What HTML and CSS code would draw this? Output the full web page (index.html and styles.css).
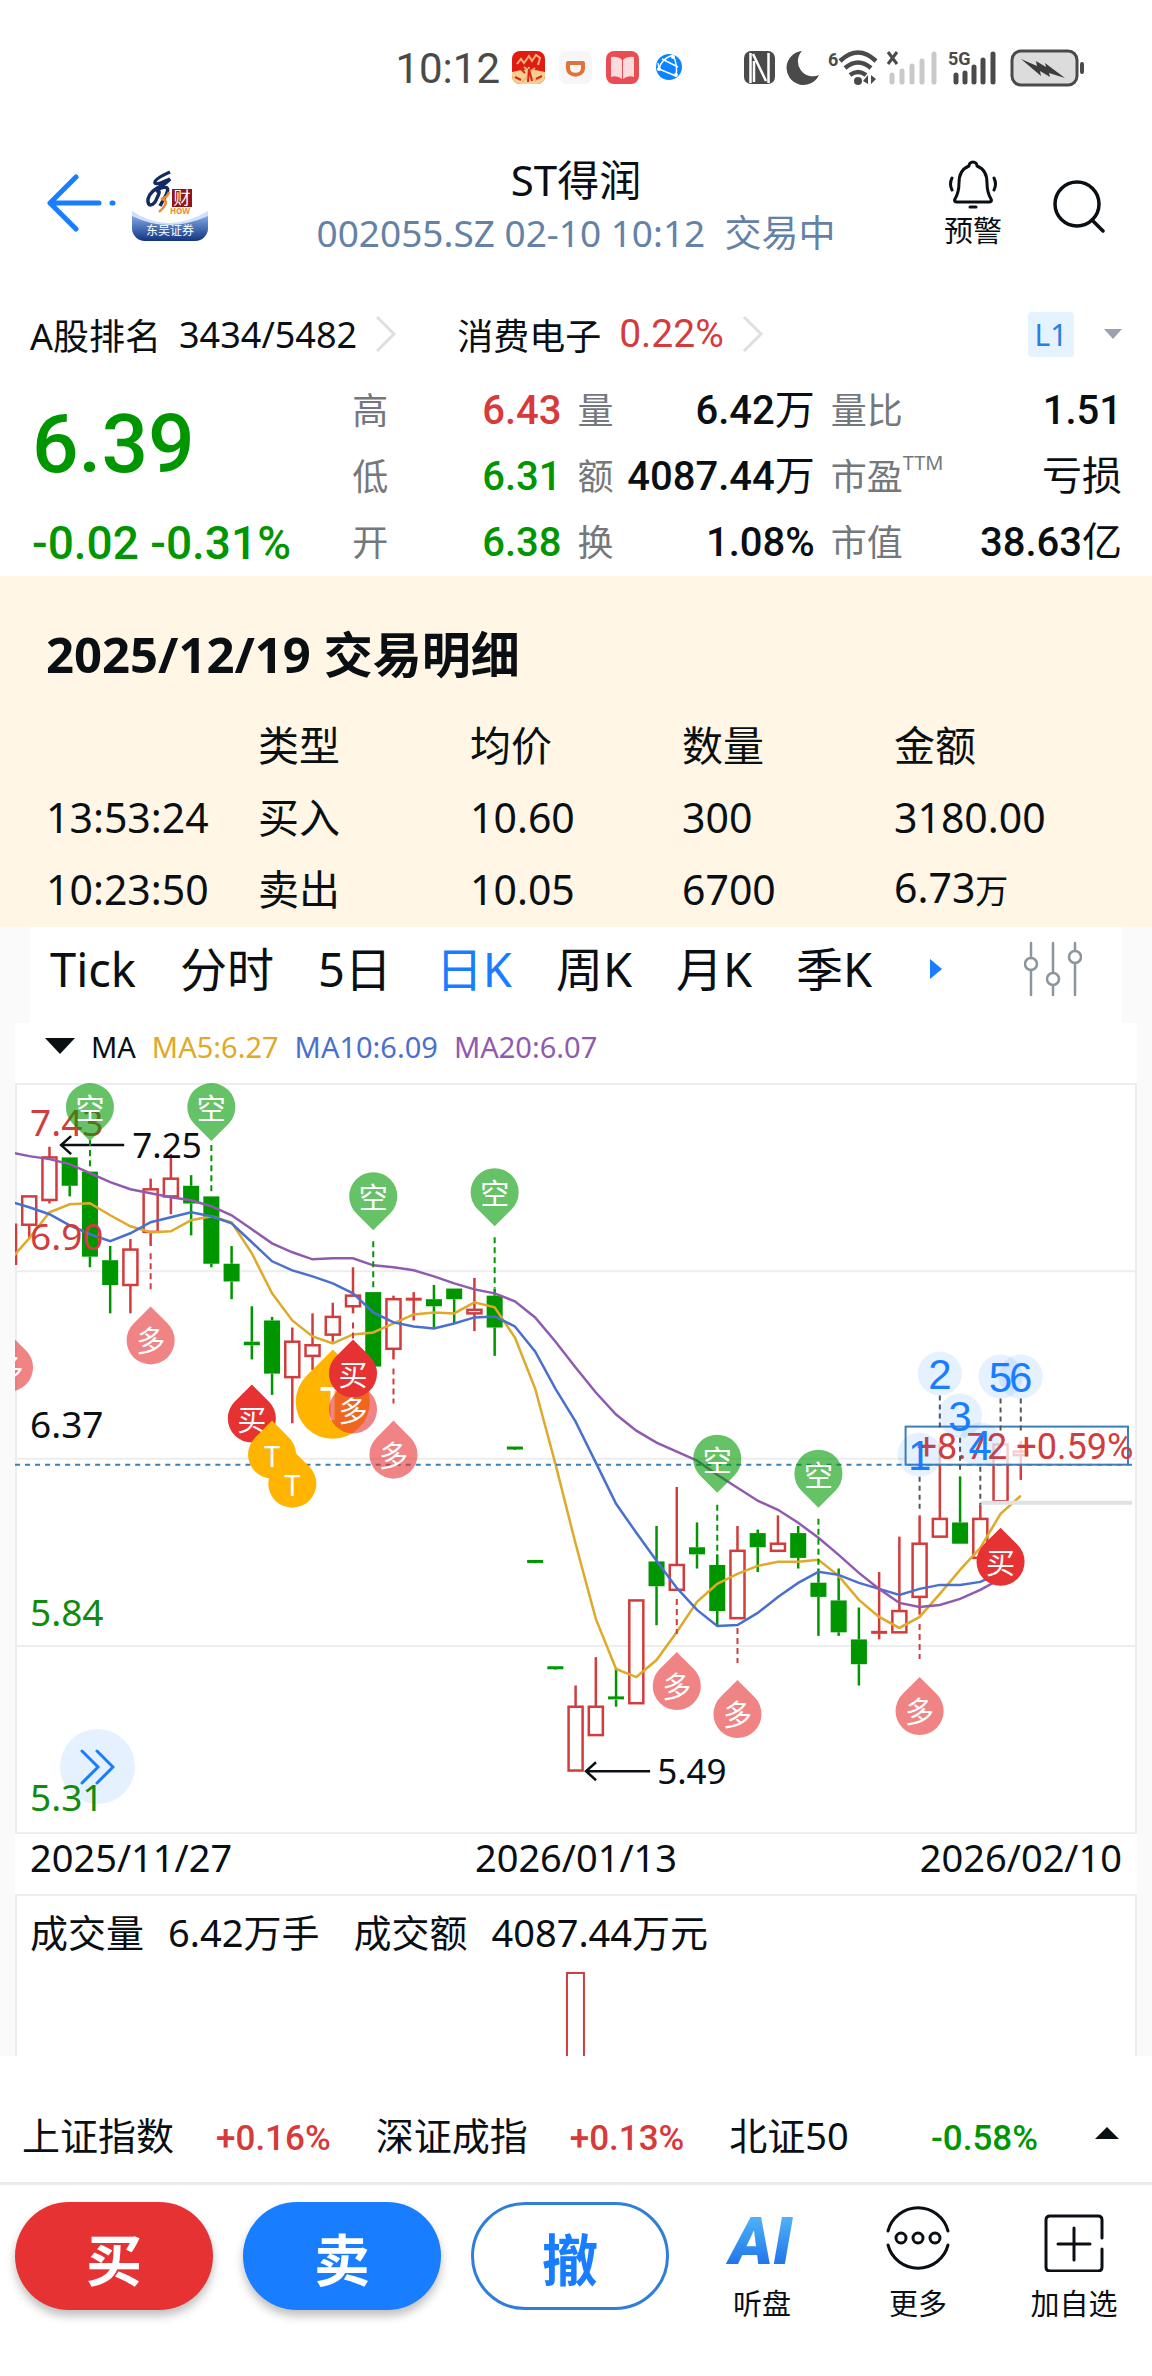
FILE: index.html
```html
<!DOCTYPE html>
<html lang="zh-CN">
<head>
  <meta charset="UTF-8">
  <meta name="viewport" content="width=device-width, initial-scale=1.0">
  <title>ST得润 002055.SZ</title>
  <link rel="stylesheet" href="styles.css">
</head>
<body>
  <div class="statusbar">
    <span class="clock">10:12</span>
    <svg class="apps" width="170" height="34" viewBox="0 0 170 34">
      <rect width="33" height="33" rx="8" fill="#e01b12"/>
      <path d="M0 21q16-5 33 0v4a8 8 0 0 1-8 8H8a8 8 0 0 1-8-8z" fill="#f7cf8e"/>
      <path d="M5 13l4-5 3 4 5-7 3 5 4-6 4 3-2 7M15 29l2-13M17 20l-5-4M17 22l6-5M10 31l7-7 7 6" stroke="#f9b27a" stroke-width="2" fill="none"/>
      <path d="M16 31l1-13 3 12M3 26l6 3M24 28l6-3M13 22l-5-5" stroke="#d8281c" stroke-width="2" fill="none"/>
      <rect x="47" width="33" height="33" rx="8" fill="#f6f6f6"/>
      <path d="M56 12h15v5c0 9-15 9-15 0z" fill="none" stroke="#e0733a" stroke-width="4" stroke-linejoin="round"/>
      <rect x="94" width="33" height="33" rx="8" fill="#ea4c54"/>
      <path d="M99 6q7-1 11 3v19q-5-4-11-2zM122 6q-7-1-11 3v19q5-4 11-2z" fill="#fbdcdc"/>
      <circle cx="157" cy="16" r="13" fill="#0a84ff"/>
      <path d="M161 4q-12 4-14 14M147 18l17 7M150 8l16 8M161 4q5 10 3 21M147 18l-1-6" fill="none" stroke="#fff" stroke-width="1.4"/>
      <circle cx="147" cy="18" r="2" fill="#fff"/><circle cx="164" cy="24" r="2" fill="#fff"/><circle cx="161" cy="6" r="2" fill="#fff"/>
    </svg>
    <svg class="system" width="340" height="38" viewBox="0 0 340 38">
      <g fill="#4a4a4a">
        <rect y="2" width="31" height="33" rx="7"/>
        <path d="M6.500 34V4M9 5l13 27M24.500 34V4M10 33V12" stroke="#fff" stroke-width="2.500" fill="none"/>
        <path d="M58 2a17 17 0 1 0 17 24A15 15 0 0 1 58 2z"/>
        <text x="84" y="17" class="tiny">6</text>
        <g fill="none" stroke="#4a4a4a" stroke-width="4.5">
          <path d="M96 12q18-17 36 0"/>
          <path d="M101 19q13-11 26 0"/>
          <path d="M106 26q8-6 16 0"/>
        </g>
        <circle cx="114" cy="32" r="4"/>
        <path d="M119 32l5-6v9zM127 26l5 4-5 5z"/>
        <path d="M144 3l9 12M153 3l-9 12" stroke="#4a4a4a" stroke-width="3"/>
        <text x="204" y="16" class="tiny">5G</text>
        <path d="M212 33v-7M221 33v-9M230 33v-15M239 33v-22M249 33V5" stroke="#4a4a4a" stroke-width="5" stroke-linecap="round"/>
      </g>
      <path d="M148 33v-7M158 33v-11M168 33v-16M178 33v-21M190 33V5" stroke="#c9c9c9" stroke-width="5" stroke-linecap="round"/>
      <rect x="268" y="2" width="65" height="34" rx="9" fill="#dcdcdc" stroke="#4a4a4a" stroke-width="3"/>
      <path d="M277 10l16 7-1-5 10 6-1-4 20 15-16-5 1 4-10-6 1 5z" fill="#3c3c3c"/>
      <rect x="336" y="13" width="4" height="12" rx="2" fill="#4a4a4a"/>
    </svg>
  </div>

  <header class="header">
    <div class="header-left">
      <button class="icon-btn" aria-label="返回">
        <svg width="70" height="64" viewBox="0 0 70 64" fill="none" stroke="#187dff" stroke-width="5" stroke-linecap="round" stroke-linejoin="round">
          <path d="M30 3L4 29l26 26M4 29h49M66 29h1"/>
        </svg>
      </button>
      <svg class="broker" width="76" height="72" viewBox="0 0 76 72">
        <defs>
          <linearGradient id="wave" x1="0" y1="0" x2="0" y2="1">
            <stop offset="0" stop-color="#7ea6e6"/>
            <stop offset="1" stop-color="#12347f"/>
          </linearGradient>
        </defs>
        <path d="M0 41q36 24 76 0v17a13 13 0 0 1-13 13H13A13 13 0 0 1 0 58z" fill="#cfe0f7"/>
        <path d="M0 46q36 18 76 0v12a13 13 0 0 1-13 13H13A13 13 0 0 1 0 58z" fill="url(#wave)"/>
        <path d="M38 2c-9 4-16 8-15 11 1 2 8-1 15-4-7 8-20 10-22 20-1 9 6 7 9-1 3-6 3-8-1-7 8-6 15-5 10 4l-6 11" fill="none" stroke="#142a63" stroke-width="3.5"/>
        <path d="M37 22q-1 5-8 7 7 1 4 6-2 4-6 7" fill="none" stroke="#ef8a2c" stroke-width="2.5"/>
        <rect x="40" y="19" width="20" height="18" fill="#8f1518"/>
        <text x="50" y="34" text-anchor="middle" font-size="17" fill="#fff">财</text>
        <text x="48" y="44" text-anchor="middle" font-size="8" font-weight="700" fill="#ef8a2c">HOW</text>
        <text x="38" y="65" text-anchor="middle" font-size="12" fill="#fff">东吴证券</text>
      </svg>
    </div>
    <div class="header-title">
      <h1>ST得润</h1>
      <p>002055.SZ 02-10 10:12&nbsp; 交易中</p>
    </div>
    <div class="header-right">
      <button class="icon-btn alert-btn">
        <svg width="50" height="50" viewBox="0 0 50 50" fill="none" stroke="#0a0f14" stroke-width="3" stroke-linecap="round" stroke-linejoin="round">
          <path d="M21 7a4 4 0 0 1 8 0c8 3 10 10 10 17 0 8 1 11 4 16 1 2 0 3-2 3H9c-2 0-3-1-2-3 3-5 4-8 4-16 0-7 2-14 10-17zM22 48h6M4 19q-3 6 0 12M46 19q3 6 0 12"/>
        </svg>
        <span>预警</span>
      </button>
      <button class="icon-btn" aria-label="搜索">
        <svg width="54" height="54" viewBox="0 0 54 54" fill="none" stroke="#0a0f14" stroke-width="3.5" stroke-linecap="round">
          <circle cx="25" cy="25" r="22"/>
          <path d="M40 41l11 11"/>
        </svg>
      </button>
    </div>
  </header>

  <div class="rank">
    <a href="#" class="rank-link">A股排名 <span>3434/5482</span>
      <svg width="22" height="38" viewBox="0 0 22 38"><path d="M2 2l17 17L2 36" fill="none" stroke="#dcdfe3" stroke-width="3"/></svg>
    </a>
    <a href="#" class="rank-link">消费电子 <span class="up din">0.22%</span>
      <svg width="22" height="38" viewBox="0 0 22 38"><path d="M2 2l17 17L2 36" fill="none" stroke="#dcdfe3" stroke-width="3"/></svg>
    </a>
    <span class="level">L1</span>
    <svg width="18" height="10" viewBox="0 0 18 10"><path d="M0 0h18l-9 10z" fill="#9aa3ad"/></svg>
  </div>

  <section class="quote">
    <div class="price down">
      <strong>6.39</strong>
      <span>-0.02 -0.31%</span>
    </div>
    <dl>
      <div><dt>高</dt><dd class="up">6.43</dd></div>
      <div><dt>低</dt><dd class="down">6.31</dd></div>
      <div><dt>开</dt><dd class="down">6.38</dd></div>
    </dl>
    <dl>
      <div><dt>量</dt><dd>6.42<i>万</i></dd></div>
      <div><dt>额</dt><dd>4087.44<i>万</i></dd></div>
      <div><dt>换</dt><dd>1.08%</dd></div>
    </dl>
    <dl>
      <div><dt>量比</dt><dd>1.51</dd></div>
      <div><dt>市盈<sup>TTM</sup></dt><dd><i>亏损</i></dd></div>
      <div><dt>市值</dt><dd>38.63<i>亿</i></dd></div>
    </dl>
  </section>

  <section class="trades">
    <h2>2025/12/19 交易明细</h2>
    <table>
      <thead>
        <tr><th></th><th>类型</th><th>均价</th><th>数量</th><th>金额</th></tr>
      </thead>
      <tbody>
        <tr><td>13:53:24</td><td>买入</td><td>10.60</td><td>300</td><td>3180.00</td></tr>
        <tr><td>10:23:50</td><td>卖出</td><td>10.05</td><td>6700</td><td>6.73<small>万</small></td></tr>
      </tbody>
    </table>
  </section>

  <main class="panel">
    <nav class="tabs">
      <button>Tick</button>
      <button>分时</button>
      <button>5日</button>
      <button class="active">日K</button>
      <button>周K</button>
      <button>月K</button>
      <button>季K</button>
      <button class="more" aria-label="更多周期">
        <svg width="12" height="20" viewBox="0 0 12 20"><path d="M0 0l12 10L0 20z" fill="#187dff"/></svg>
      </button>
      <button class="settings" aria-label="指标设置">
        <svg width="58" height="56" viewBox="0 0 58 56" fill="none" stroke="#8c959e" stroke-width="2.5" stroke-linecap="round">
          <path d="M7 2v15M7 29v25M29 2v30M29 44v10M51 2v8M51 22v32"/>
          <circle cx="7" cy="23" r="6"/><circle cx="29" cy="38" r="6"/><circle cx="51" cy="16" r="6"/>
        </svg>
      </button>
    </nav>

    <div class="chart-box">
      <div class="legend">
        <svg width="30" height="16" viewBox="0 0 30 16"><path d="M0 0h30L15 16z" fill="#0a0f14"/></svg>
        <span>MA</span>
        <span class="ma5">MA5:6.27</span>
        <span class="ma10">MA10:6.09</span>
        <span class="ma20">MA20:6.07</span>
      </div>
      <div class="chart">
        <button class="forward" aria-label="快进">
          <svg width="36" height="36" viewBox="0 0 36 36" fill="none" stroke="#187dff" stroke-width="3" stroke-linecap="round"><path d="M3 2l16 16L3 34M18 2l16 16-16 16"/></svg>
        </button>
        <svg id="kline" viewBox="0 0 1120 750"></svg>
      </div>
      <div class="dates">
        <span>2025/11/27</span><span>2026/01/13</span><span>2026/02/10</span>
      </div>
      <div class="volume">
        <p><span>成交量</span><span>6.42万手</span><span class="amount">成交额</span><span>4087.44万元</span></p>
        <svg viewBox="0 0 1120 84"><rect x="551" y="1" width="17" height="90" fill="#fff" stroke="#d23c3c" stroke-width="2"/></svg>
      </div>
    </div>
  </main>

  <div class="indices">
    <div><span>上证指数</span><b class="up">+0.16%</b></div>
    <div><span>深证成指</span><b class="up">+0.13%</b></div>
    <div><span>北证50</span><b class="down">-0.58%</b></div>
    <svg width="24" height="12" viewBox="0 0 24 12"><path d="M0 12h24L12 0z" fill="#0a0f14"/></svg>
  </div>

  <footer class="actions">
    <div class="orders">
      <button class="buy">买</button>
      <button class="sell">卖</button>
      <button class="cancel">撤</button>
    </div>
    <div class="tools">
      <button>
        <svg width="84" height="70" viewBox="0 0 84 70">
          <defs>
            <linearGradient id="ai" x1="0" y1="0" x2="0" y2="1">
              <stop offset="0" stop-color="#5fc3fb"/>
              <stop offset="1" stop-color="#0f62e6"/>
            </linearGradient>
          </defs>
          <text x="41" y="62" text-anchor="middle" class="ai" fill="url(#ai)">AI</text>
        </svg>
        <span>听盘</span>
      </button>
      <button>
        <svg width="68" height="70" viewBox="0 0 68 70" fill="none" stroke="#0a0f14" stroke-width="3" stroke-linecap="round">
          <path d="M4 29a31 31 0 0 1 60 0M4 43a31 31 0 0 0 60 0"/>
          <circle cx="17" cy="36" r="5"/><circle cx="34" cy="36" r="5"/><circle cx="51" cy="36" r="5"/>
        </svg>
        <span>更多</span>
      </button>
      <button>
        <svg width="68" height="70" viewBox="0 0 68 70" fill="none" stroke="#0a0f14" stroke-width="3" stroke-linecap="round">
          <path d="M62 36V18q0-4-4-4H10q-4 0-4 4v47q0 4 4 4h48q4 0 4-4V47M18 42h32M34 26v32"/>
        </svg>
        <span>加自选</span>
      </button>
    </div>
  </footer>

  <script src="chart.js"></script>
</body>
</html>
```
FILE: styles.css
```css
* {
  box-sizing: border-box;
}
body {
  margin: 0;
  background-color: #ffffff;
  color: #0a0f14;
  font-family: "Noto Sans", "Noto Sans CJK SC", sans-serif;
  font-size: 37px;
}
h1, h2, p, dl, dd {
  margin: 0;
}
svg {
  display: block;
}
button {
  padding: 0;
  border: none;
  background: none;
  color: inherit;
  font-family: inherit;
  cursor: pointer;
}
a {
  color: inherit;
  text-decoration: none;
}
.up {
  color: #d63a3a;
}
.down {
  color: #009600;
}
.din,
.price,
.quote dd,
.indices b,
.clock {
  font-family: Roboto, "Noto Sans CJK SC", sans-serif;
}

/* status bar */
.statusbar {
  display: flex;
  align-items: center;
  justify-content: flex-end;
  height: 136px;
  padding-right: 68px;
}
.clock {
  margin-right: 12px;
  font-size: 42px;
  color: #4a4a4a;
}
.system {
  margin-left: 62px;
}
.tiny {
  font-family: Roboto, sans-serif;
  font-size: 18px;
  font-weight: 700;
}

/* header */
.header {
  display: grid;
  grid-template-columns: 1fr auto 1fr;
  align-items: center;
  height: 140px;
  padding: 0 46px;
  margin-bottom: 16px;
}
.header-left,
.header-right {
  display: flex;
  align-items: center;
  gap: 16px;
}
.header-right {
  justify-content: flex-end;
  gap: 50px;
}
.header-title {
  text-align: center;
  line-height: 53px;
}
.header-title h1 {
  font-size: 42px;
  font-weight: 400;
  line-height: 53px;
}
.header-title p {
  color: #6482a6;
}
.alert-btn {
  display: flex;
  flex-direction: column;
  align-items: center;
  font-size: 29px;
  line-height: 44px;
}

/* rank row */
.rank {
  display: flex;
  align-items: center;
  height: 84px;
  padding: 0 30px;
}
.rank-link {
  display: flex;
  align-items: center;
  gap: 18px;
  margin-right: 60px;
  font-size: 36px;
}
.rank .din {
  font-size: 39px;
}
.level {
  margin-left: auto;
  margin-right: 30px;
  width: 46px;
  border-radius: 4px;
  background-color: #e5f2ff;
  color: #2a7de1;
  font-size: 30px;
  line-height: 45px;
  text-align: center;
}

/* quote */
.quote {
  display: grid;
  grid-template-columns: 304fr 209fr 237fr 291fr;
  gap: 16px;
  padding: 2px 30px 0 32px;
}
.price {
  font-weight: 500;
  white-space: nowrap;
}
.price strong {
  display: block;
  font-size: 82px;
  font-weight: 500;
  line-height: 132px;
}
.price span {
  font-size: 46px;
  line-height: 66px;
}
.quote dl div {
  display: flex;
  justify-content: space-between;
  height: 66px;
  line-height: 66px;
  white-space: nowrap;
}
.quote dt {
  font-size: 36px;
  color: #74787d;
}
.quote dd {
  font-size: 40px;
  font-weight: 500;
}
.quote i {
  font-style: normal;
  font-weight: 400;
}
.quote sup {
  font-size: 20px;
  line-height: 20px;
  vertical-align: 20px;
}

/* trade details */
.trades {
  padding: 48px 46px 2px;
  background-color: #fff6e5;
}
.trades h2 {
  margin-bottom: 25px;
  font-size: 49px;
  line-height: 60px;
}
.trades table {
  width: 100%;
  border-collapse: collapse;
  table-layout: fixed;
  font-size: 41px;
}
.trades th,
.trades td {
  height: 72px;
  padding: 0;
  font-weight: 400;
  line-height: 60px;
  text-align: left;
}
.trades small {
  font-size: 33px;
}

/* chart panel */
.panel {
  background-color: #fafafa;
}
.tabs {
  display: flex;
  align-items: center;
  gap: 44px;
  height: 96px;
  margin: 0 30px;
  padding: 0 40px 12px 20px;
  background-color: #ffffff;
}
.tabs button {
  font-size: 47px;
  line-height: 60px;
  white-space: nowrap;
}
.tabs .active {
  color: #187dff;
}
.tabs .more {
  margin-left: 14px;
}
.tabs .settings {
  margin-left: auto;
}
.chart-box {
  margin: 0 15px;
  background-color: #ffffff;
}
.legend {
  display: flex;
  align-items: center;
  gap: 16px;
  height: 60px;
  padding: 0 30px 14px;
  font-size: 29px;
}
.ma5 {
  color: #dfa92a;
}
.ma10 {
  color: #4a70cf;
}
.ma20 {
  color: #905aaf;
}
.chart {
  position: relative;
}
#kline {
  position: relative;
  width: 100%;
  pointer-events: none;
}
.forward {
  position: absolute;
  left: 4%;
  bottom: 4%;
  display: grid;
  place-items: center;
  width: 75px;
  height: 75px;
  border-radius: 50%;
  background-color: #e5f1ff;
}
.dates {
  display: flex;
  justify-content: space-between;
  height: 60px;
  padding: 0 15px;
  font-size: 38px;
  line-height: 46px;
}
.volume {
  border: 2px solid #ededed;
  border-bottom: none;
}
.volume p {
  display: flex;
  gap: 24px;
  height: 76px;
  padding: 0 13px;
  font-size: 38px;
  line-height: 72px;
}
.volume .amount {
  margin-left: 10px;
}

/* chart texts */
.axis {
  font-size: 37px;
}
.extreme {
  font-size: 35px;
}
.cost {
  font-family: Roboto, sans-serif;
  font-size: 36px;
}
.pin-text {
  font-size: 29px;
  fill: #ffffff;
  text-anchor: middle;
}
.count {
  font-family: "Liberation Sans", sans-serif;
  font-size: 42px;
  fill: #187dff;
  text-anchor: middle;
}

/* index bar */
.indices {
  display: flex;
  align-items: center;
  gap: 45px;
  padding: 28px 33px 0 22px;
  height: 126px;
  font-size: 38px;
}
.indices div {
  flex: 1;
  display: flex;
  justify-content: space-between;
  align-items: baseline;
}
.indices b {
  font-size: 35px;
  font-weight: 500;
}
.indices svg {
  margin-left: 12px;
}

/* bottom actions */
.actions {
  display: flex;
  gap: 15px;
  padding: 17px 0 66px 15px;
  border-top: 3px solid #ebebeb;
}
.orders {
  flex: 654;
  display: grid;
  grid-template-columns: repeat(3, 1fr);
  gap: 30px;
}
.orders button {
  height: 108px;
  border-radius: 54px;
  color: #ffffff;
  font-size: 56px;
  font-weight: 700;
}
.orders .buy {
  background-color: #e63232;
  box-shadow: 0 6px 10px rgba(0, 0, 0, 0.25);
}
.orders .sell {
  background-color: #187dff;
  box-shadow: 0 6px 10px rgba(0, 0, 0, 0.25);
}
.orders .cancel {
  border: 3px solid #2f7edb;
  color: #187dff;
}
.tools {
  flex: 468;
  display: flex;
}
.tools button {
  flex: 1;
  display: flex;
  flex-direction: column;
  align-items: center;
  font-size: 29px;
  line-height: 64px;
}
.ai {
  font-family: Roboto, sans-serif;
  font-size: 66px;
  font-style: italic;
  font-weight: 900;
}
```
FILE: chart.js
```js
const STEP = 20.2;
const TOP_PRICE = 7.43;
const SCALE = 750 / 2.12;
const RED = '#d23c3c';
const GREEN = '#009600';

// [open, close, high, low]
const candles = [
  [6.92, 7.03, 7.03, 6.92], [7.03, 7.11, 7.11, 6.99], [7.10, 7.22, 7.25, 7.09], [7.22, 7.14, 7.22, 7.11],
  [7.18, 6.94, 7.18, 6.91], [6.93, 6.86, 6.97, 6.78], [6.86, 6.96, 6.99, 6.78], [7.01, 7.13, 7.16, 6.97],
  [7.11, 7.16, 7.23, 7.06], [7.14, 7.09, 7.17, 7.00], [7.11, 6.92, 7.11, 6.91], [6.92, 6.87, 6.97, 6.82],
  [6.70, 6.69, 6.80, 6.65], [6.76, 6.61, 6.77, 6.55], [6.60, 6.70, 6.74, 6.47], [6.66, 6.69, 6.78, 6.62],
  [6.72, 6.77, 6.81, 6.70], [6.80, 6.83, 6.91, 6.78], [6.84, 6.63, 6.84, 6.63], [6.68, 6.82, 6.83, 6.65],
  [6.82, 6.82, 6.84, 6.76], [6.82, 6.80, 6.86, 6.74], [6.85, 6.82, 6.85, 6.75], [6.78, 6.79, 6.88, 6.73],
  [6.83, 6.74, 6.85, 6.66], [6.40, 6.395, 6.40, 6.40], [6.08, 6.075, 6.08, 6.08], [5.78, 5.775, 5.78, 5.78],
  [5.49, 5.67, 5.73, 5.49], [5.59, 5.67, 5.81, 5.59], [5.695, 5.69, 5.78, 5.67], [5.68, 5.97, 5.97, 5.68],
  [6.08, 6.01, 6.18, 5.90], [6.00, 6.07, 6.29, 6.00], [6.12, 6.10, 6.19, 6.06], [6.07, 5.94, 6.10, 5.90],
  [5.92, 6.11, 6.18, 5.92], [6.16, 6.12, 6.17, 6.05], [6.11, 6.13, 6.21, 6.11], [6.16, 6.09, 6.18, 6.06],
  [6.02, 5.98, 6.06, 5.87], [5.97, 5.88, 6.06, 5.87], [5.86, 5.79, 5.95, 5.73], [5.88, 5.88, 6.05, 5.86],
  [5.88, 5.94, 6.15, 5.88], [5.98, 6.13, 6.21, 5.93], [6.15, 6.20, 6.42, 6.15], [6.19, 6.13, 6.32, 6.13],
  [6.09, 6.20, 6.24, 6.09], [6.25, 6.41, 6.41, 6.25], [6.38, 6.39, 6.42, 6.31]
];

// moving averages, y of each day
const ma = {
  '#dfa92a': [178, 155, 129, 121, 120, 132, 143, 149, 148, 137, 133, 139, 170, 210, 237, 253, 260, 251, 249, 240, 231, 229, 230, 219, 224, 254, 305, 380, 460, 535, 585, 593, 576, 548, 518, 500, 490, 482, 478, 478, 476, 492, 516, 533, 544, 533, 510, 486, 464, 430, 412],
  '#4a70cf': [118, 124, 131, 142, 151, 158, 150, 139, 134, 129, 133, 140, 159, 178, 187, 193, 200, 210, 229, 239, 243, 245, 240, 234, 233, 243, 268, 305, 338, 379, 420, 449, 477, 504, 526, 542, 541, 529, 513, 499, 488, 491, 499, 505, 511, 505, 501, 501, 498, 489],
  '#905aaf': [69, 73, 76, 81, 90, 99, 106, 110, 114, 117, 123, 132, 146, 160, 169, 176, 175, 175, 182, 184, 187, 193, 200, 206, 210, 218, 234, 258, 284, 309, 331, 347, 359, 368, 377, 391, 404, 417, 426, 439, 454, 471, 489, 505, 519, 523, 521, 515, 506, 495]
};

// vertical dashes: [day, from, to, color]
const dashes = [
  [4, 57, 84, GREEN], [10, 62, 112, GREEN], [18, 158, 208, GREEN], [24, 154, 205, GREEN],
  [35, 421, 471, GREEN], [40, 435, 485, GREEN],
  [7, 170, 207, RED], [17, 239, 256, RED], [19, 285, 320, RED],
  [33, 515, 550, RED], [36, 544, 579, RED], [45, 540, 575, RED]
];

// pins: [type, day, y of the tip]
const pins = [
  ['short', 4, 58], ['short', 10, 58], ['short', 18, 147], ['short', 24, 143], ['short', 35, 409], ['short', 40, 424],
  ['long', 0, 250], ['long', 7, 223], ['long', 19, 337], ['long', 33, 568], ['long', 36, 596], ['long', 45, 593],
  ['buy', 12, 301], ['t', 13, 337], ['t', 14, 366], ['bigT', 16, 266], ['long', 17, 292], ['buy', 17, 256], ['buy', 49, 444]
];
const pinTypes = {
  short: { text: '空', fill: '#009900', opacity: 0.6, down: true },
  long: { text: '多', fill: '#e63232', opacity: 0.6 },
  buy: { text: '买', fill: '#e63232', opacity: 1 },
  t: { text: 'T', fill: '#ffb400', opacity: 1 },
  bigT: { text: 'T', fill: '#ffb400', opacity: 1, scale: 1.54 }
};

// day counter: [number, day, y, end of its dashes]
const counts = [
  [1, 45, 371, 429], [2, 46, 290, 347], [3, 47, 332, 390], [4, 48, 361, 421], [5, 49, 293, 351], [6, 50, 293, 351]
];

const x = i => i * STEP - 6;
const y = price => (TOP_PRICE - price) * SCALE;
const line = (x1, y1, x2, y2, color, width, dash) =>
  `<line x1="${x1}" y1="${y1}" x2="${x2}" y2="${y2}" stroke="${color}" stroke-width="${width}" stroke-dasharray="${dash || 'none'}"/>`;

let out = '';

for (let g = 0; g <= 4; g++) {
  out += line(0, 1 + g * 187, 1120, 1 + g * 187, '#ededed', 2);
}
out += line(1, 0, 1, 750, '#ededed', 2) + line(1119, 0, 1119, 750, '#ededed', 2);

candles.forEach(([open, close, high, low], i) => {
  const color = close >= open ? RED : GREEN;
  const top = y(Math.max(open, close));
  const bottom = y(Math.min(open, close));
  out += line(x(i), y(high), x(i), top, color, 2.5);
  out += line(x(i), bottom, x(i), y(low), color, 2.5);
  if (bottom - top < 3) {
    out += line(x(i) - 8, top, x(i) + 8, top, color, 3);
  } else if (color === RED) {
    out += `<rect x="${x(i) - 7}" y="${top}" width="14" height="${bottom - top}" fill="#fff" stroke="${RED}" stroke-width="2.5"/>`;
  } else {
    out += `<rect x="${x(i) - 8}" y="${top}" width="16" height="${bottom - top}" fill="${GREEN}"/>`;
  }
});

for (const color in ma) {
  const points = ma[color].map((v, i) => x(i) + ',' + v).join(' ');
  out += `<polyline points="${points}" fill="none" stroke="${color}" stroke-width="2.5"/>`;
}

out += line(0, 381, 1120, 381, '#3a7fb5', 2, '5 5');
out += line(964, 419, 1115, 419, '#dfe1e4', 4);

[['7.43', 53, RED], ['6.90', 167, RED], ['6.37', 354, '#0a0f14'], ['5.84', 542, '#0f8c0f'], ['5.31', 727, '#0f8c0f']].forEach(([text, ty, color]) => {
  out += `<text class="axis" x="15" y="${ty}" fill="${color}">${text}</text>`;
});

// highest and lowest price
out += '<g fill="none" stroke="#0a0f14" stroke-width="2.5"><path d="M109 62H46M56 53l-10 9 10 9M634 687h-64M580 678l-10 9 10 9"/></g>';
out += '<text class="extreme" x="117" y="75" fill="#0a0f14">7.25</text><text class="extreme" x="641" y="700" fill="#0a0f14">5.49</text>';

dashes.forEach(([day, from, to, color]) => {
  out += line(x(day), from, x(day), to, color, 2, '6 4');
});

pins.forEach(([type, day, tip]) => {
  const pin = pinTypes[type];
  const s = pin.scale || 1;
  out += `<g transform="translate(${x(day)} ${tip}) scale(${s})">
    <path d="M0 0l17 17A24 24 0 1 1 -17 17z" fill="${pin.fill}" fill-opacity="${pin.opacity}" ${pin.down ? 'transform="rotate(180)"' : ''}/>
    <text class="pin-text" y="${pin.down ? -21 : 46}">${pin.text}</text>
  </g>`;
});

// cost label
out += '<rect x="889" y="343" width="222" height="38" fill="#fff" fill-opacity="0.75" stroke="#3a7fb5" stroke-width="2"/>';
out += `<text class="cost" x="900" y="375" fill="${RED}">+8.72 +0.59%</text>`;

counts.forEach(([n, day, cy, end]) => {
  out += line(x(day), cy + 22, x(day), end, '#555', 2, '5 4');
  out += `<circle cx="${x(day)}" cy="${cy}" r="22" fill="#187dff" fill-opacity="0.11"/>`;
  out += `<text class="count" x="${x(day)}" y="${cy + 15}">${n}</text>`;
});

document.getElementById('kline').innerHTML = out;
```
